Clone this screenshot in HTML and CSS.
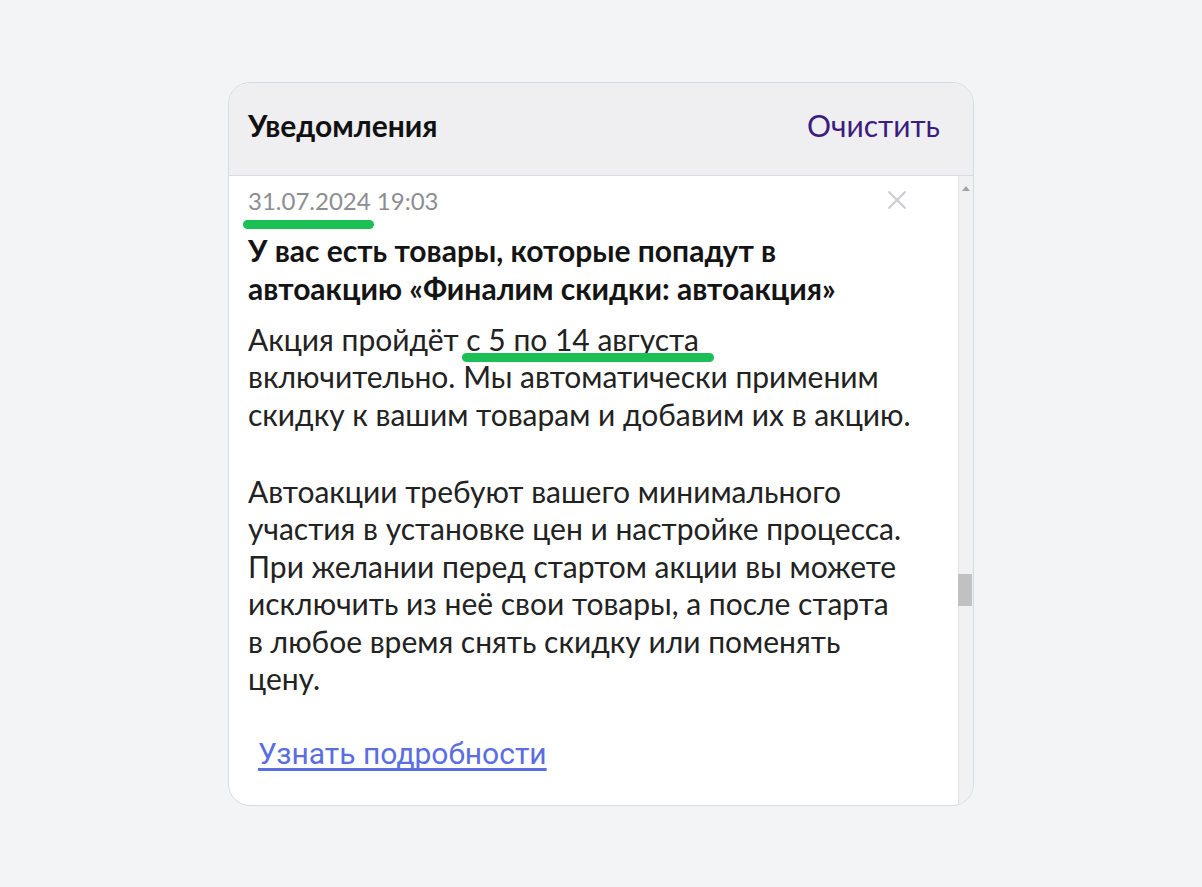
FILE: index.html
```html
<!DOCTYPE html>
<html lang="ru">
<head>
<meta charset="utf-8">
<link rel="stylesheet" href="styles.css">
</head>
<body>
<div class="card">
  <div class="card-head">
    <div class="title">Уведомления</div>
    <div class="clear">Очистить</div>
  </div>
  <div class="card-body">
    <div class="content">
      <div class="meta-row">
        <div class="date"><span class="mark mark-date">31.07.2024</span> 19:03</div>
        <svg class="close" width="20" height="20" viewBox="0 0 20 20"><path d="M1.5 1.5 L18.5 18.5 M18.5 1.5 L1.5 18.5" stroke="#cacad0" stroke-width="2" fill="none"/></svg>
      </div>
      <div class="headline">У вас есть товары, которые попадут в автоакцию «Финалим скидки: автоакция»</div>
      <p class="text">Акция пройдёт <span class="mark mark-range">с 5 по 14 августа</span><br>включительно. Мы автоматически применим скидку к вашим товарам и добавим их в акцию.</p>
      <p class="text">Автоакции требуют вашего минимального участия в установке цен и настройке процесса. При желании перед стартом акции вы можете исключить из неё свои товары, а после старта в&nbsp;любое время снять скидку или поменять цену.</p>
      <a class="more" href="#">Узнать подробности</a>
    </div>
    <div class="scrollbar">
      <div class="arrow"></div>
      <div class="thumb"></div>
    </div>
  </div>
</div>
</body>
</html>
```
FILE: styles.css
```css
html, body {
  margin: 0;
  padding: 0;
}
body {
  background: #f3f4f6;
  height: 100vh;
  display: flex;
  align-items: center;
  justify-content: center;
  font-family: "Lato", "Liberation Sans", sans-serif;
}
.card {
  width: 744px;
  height: 722px;
  background: #fff;
  border: 1px solid #d9dadd;
  border-radius: 22px;
  overflow: hidden;
  display: flex;
  flex-direction: column;
}
.card-head {
  height: 84px;
  flex: none;
  background: #efeff2;
  border-bottom: 1px solid #dcdce0;
  display: flex;
  align-items: center;
  justify-content: space-between;
  padding: 0 33px 8px 19px;
}
.title {
  font-size: 30px;
  font-weight: 700;
  color: #111;
}
.clear {
  font-size: 30px;
  color: #3c1c7e;
}
.card-body {
  flex: 1;
  display: flex;
  min-height: 0;
}
.content {
  flex: 1;
  padding: 7px 20px 0 19px;
  color: #222;
}
.meta-row {
  display: flex;
  justify-content: space-between;
  align-items: center;
  height: 36px;
}
.date {
  font-size: 24px;
  color: #8d8d93;
}
.close {
  margin-right: 31px;
  margin-top: -2px;
}
.mark {
  position: relative;
}
.mark::after {
  content: "";
  position: absolute;
  background: #1bbf55;
  border-radius: 5px;
  height: 9px;
}
.mark-date::after {
  left: -5px;
  right: -3px;
  bottom: -14px;
}
.mark-range::after {
  left: -4px;
  right: -15px;
  bottom: -5px;
}
.headline {
  font-size: 30px;
  font-weight: 700;
  line-height: 38px;
  margin-top: 12px;
  color: #141414;
  width: 668px;
}
.text {
  font-size: 30px;
  line-height: 37.5px;
  margin: 14px 0 0;
  width: 668px;
}
.text + .text {
  margin-top: 39.5px;
}
.more {
  display: inline-block;
  margin: 38px 0 0 10px;
  font-family: "Roboto", sans-serif;
  font-size: 30px;
  color: #5b6ee1;
  text-decoration: underline;
  text-decoration-skip-ink: none;
  text-underline-offset: 4px;
}
.scrollbar {
  width: 14px;
  flex: none;
  background: #f1f1f3;
  border-left: 1px solid #e2e2e6;
  display: flex;
  flex-direction: column;
  align-items: center;
}
.arrow {
  margin-top: 10px;
  width: 0;
  height: 0;
  border-left: 4px solid transparent;
  border-right: 4px solid transparent;
  border-bottom: 5px solid #a3a3a3;
}
.thumb {
  margin-top: 383px;
  width: 14px;
  height: 32px;
  background: #c1c1c1;
  margin-left: -2px;
}
```
